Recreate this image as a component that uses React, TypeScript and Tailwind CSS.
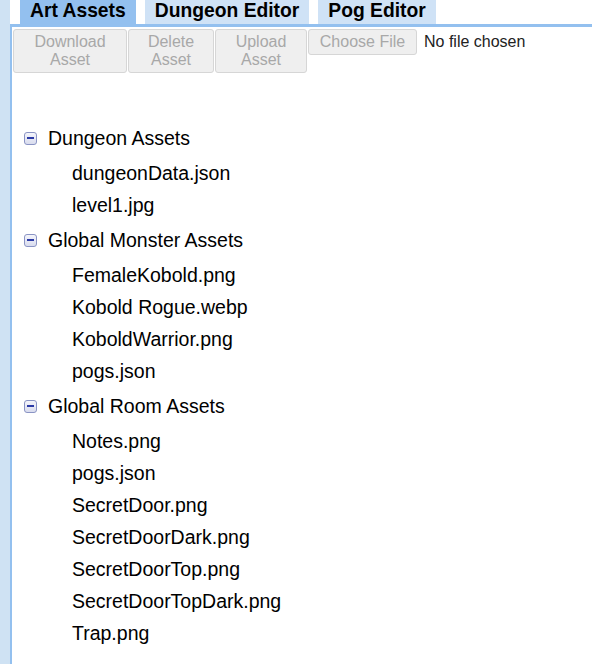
import React from "react";

const groups = [
  { name: "Dungeon Assets", items: ["dungeonData.json", "level1.jpg"] },
  {
    name: "Global Monster Assets",
    items: ["FemaleKobold.png", "Kobold Rogue.webp", "KoboldWarrior.png", "pogs.json"],
  },
  {
    name: "Global Room Assets",
    items: [
      "Notes.png",
      "pogs.json",
      "SecretDoor.png",
      "SecretDoorDark.png",
      "SecretDoorTop.png",
      "SecretDoorTopDark.png",
      "Trap.png",
    ],
  },
];

function MinusIcon() {
  return (
    <span className="flex h-[13px] w-[13px] items-center justify-center rounded-[3px] border border-[#8a94c4] bg-gradient-to-b from-[#f4f5fb] to-[#d9dcee]">
      <span className="h-[2px] w-[7px] bg-[#2b3aa6]" />
    </span>
  );
}

function Btn({ w, children }: { w: string; children: React.ReactNode }) {
  return (
    <button
      disabled
      className={`${w} rounded-[3px] border border-[#d6d6d6] bg-[#efefef] text-[16px] leading-[18px] text-[#a8a8a8]`}
    >
      {children}
    </button>
  );
}

export default function App() {
  return (
    <div className="flex min-h-[664px] bg-white font-['Liberation_Sans',Arial,sans-serif] text-black">
      <div className="w-[10px] shrink-0 bg-[#cfe2f3]" />
      <div className="flex flex-1 flex-col">
        <div className="flex h-[24px] gap-[9px] pl-[10px]">
          <div className="h-[24px] bg-[#93c0ef] px-[10px] text-[19.3px] font-bold leading-[21px]">Art Assets</div>
          <div className="h-[24px] bg-[#cfe2f6] px-[10px] text-[19.3px] font-bold leading-[21px]">Dungeon Editor</div>
          <div className="h-[24px] bg-[#cfe2f6] px-[10px] text-[19.3px] font-bold leading-[21px]">Pog Editor</div>
        </div>
        <div className="h-[3px] bg-[#93c0ef]" />
        <div className="flex-1 border-l-2 border-[#93c0ef] pl-[1px] pt-[2px]">
          <div className="flex items-start gap-[1px]">
            <Btn w="w-[114px] h-[44px]">
              Download
              <br />
              Asset
            </Btn>
            <Btn w="w-[86px] h-[44px]">
              Delete
              <br />
              Asset
            </Btn>
            <Btn w="w-[92px] h-[44px]">
              Upload
              <br />
              Asset
            </Btn>
            <div className="flex items-center">
              <Btn w="w-[109px] h-[26px]">Choose File</Btn>
              <span className="ml-[7px] text-[16px] leading-[26px] text-[#222]">No file chosen</span>
            </div>
          </div>
          <div className="mt-[46px] text-[19.5px]">
            {groups.map((g) => (
              <div key={g.name}>
                <div className="flex h-[38px] items-center pl-[11px]">
                  <MinusIcon />
                  <span className="ml-[11px] leading-[22px]">{g.name}</span>
                </div>
                {g.items.map((it, i) => (
                  <div key={i} className="flex h-[32px] items-center pl-[59px] leading-[22px]">
                    {it}
                  </div>
                ))}
              </div>
            ))}
          </div>
        </div>
      </div>
    </div>
  );
}
